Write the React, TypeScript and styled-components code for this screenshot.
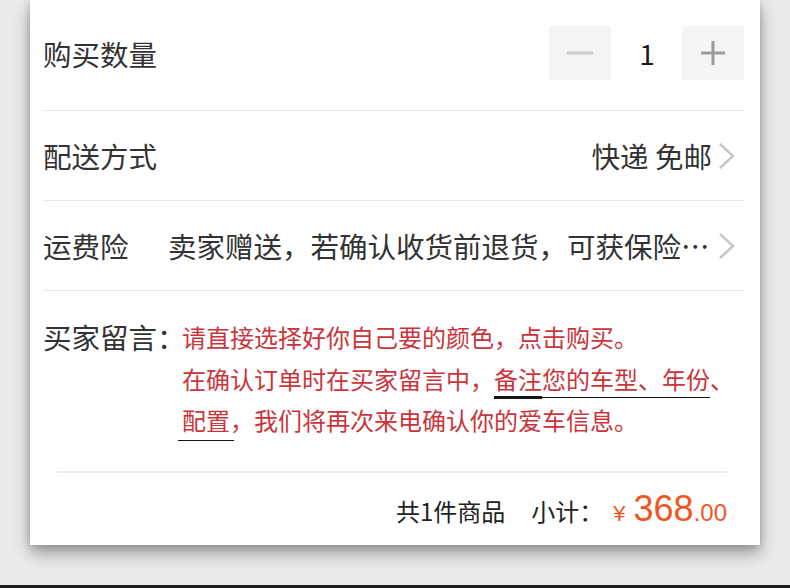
import React from "react";
import styled, { createGlobalStyle } from "styled-components";

const GlobalStyle = createGlobalStyle`
  html, body {
    margin: 0;
    padding: 0;
    background: #ebebeb;
  }
  body {
    font-family: "Noto Sans CJK SC", "Noto Sans", sans-serif;
    -webkit-font-smoothing: antialiased;
  }
`;

const Page = styled.div`
  width: 790px;
  height: 588px;
  display: flex;
  flex-direction: column;
  overflow: hidden;
  background: #ebebeb;
`;

const Stage = styled.div`
  flex: 1;
  padding-left: 30px;
`;

const Card = styled.div`
  width: 730px;
  background: #ffffff;
  box-shadow: 0 8px 16px rgba(0, 0, 0, 0.36), 0 1px 7px rgba(0, 0, 0, 0.14);
`;

const BottomBar = styled.div`
  height: 3px;
  background: #1f1f1f;
`;

const RowList = styled.div`
  margin: 0 16px 0 13px;
`;

const Row = styled.div<{ $h: number; $pb?: number }>`
  height: ${(p) => p.$h}px;
  padding-bottom: ${(p) => p.$pb ?? 0}px;
  box-sizing: content-box;
  display: flex;
  align-items: center;
  border-bottom: 1px solid #e8e8e8;
  font-size: 28.5px;
  color: #333333;
`;

const Label = styled.div<{ $w?: number }>`
  flex: 0 0 ${(p) => (p.$w ? `${p.$w}px` : "auto")};
  white-space: nowrap;
`;

const Value = styled.div`
  flex: 1;
  min-width: 0;
  white-space: nowrap;
  overflow: hidden;
`;

const RightValue = styled.div`
  margin-left: auto;
  white-space: nowrap;
`;

const Chevron = styled.svg`
  flex: 0 0 auto;
  width: 24px;
  height: 30px;
  margin: 0 4px 0 4px;
`;

const Stepper = styled.div`
  margin-left: auto;
  display: flex;
  align-items: center;
`;

const StepButton = styled.div`
  width: 62px;
  height: 54px;
  background: #f5f5f5;
  display: flex;
  align-items: center;
  justify-content: center;
`;

const Count = styled.div`
  width: 71px;
  padding-left: 1px;
  box-sizing: border-box;
  text-align: center;
  font-size: 28px;
  color: #1a1a1a;
`;

const Message = styled.div`
  display: flex;
  align-items: flex-start;
  padding: 25px 16px 30.5px 13px;
  line-height: 41.5px;
`;

const MessageLabel = styled.div`
  flex: 0 0 139px;
  min-width: 0;
  font-size: 28.5px;
  color: #333333;
  white-space: nowrap;
`;

const MessageText = styled.div`
  flex: 1;
  font-size: 24px;
  color: #c9353b;
`;

const Mark = styled.span<{ $thick?: boolean; $extra?: number }>`
  border-bottom: ${(p) => (p.$thick ? 3 : 1)}px solid #151515;
  padding-bottom: ${(p) => p.$extra ?? 0}px;
`;

const WideMark = styled.span`
  border-bottom: 1px solid #151515;
  padding: 0 4px 3px;
  margin: 0 -4px;
`;

const Footer = styled.div`
  margin: 0 33px 0 27px;
  border-top: 2px solid #ececec;
  display: flex;
  justify-content: flex-end;
  align-items: baseline;
  padding-top: 15px;
  box-sizing: border-box;
  height: 74px;
`;

const Summary = styled.span`
  font-size: 24px;
  color: #222222;
  margin-right: 26px;
`;

const SubLabel = styled.span`
  font-size: 24px;
  color: #222222;
  margin-right: 10px;
`;

const Currency = styled.span`
  font-family: "Liberation Sans", Arial, sans-serif;
  font-size: 22px;
  color: #f2561f;
  margin-right: 8px;
`;

const PriceMain = styled.span`
  font-family: "Liberation Sans", Arial, sans-serif;
  font-size: 36px;
  color: #f2561f;
`;

const PriceCents = styled.span`
  font-family: "Liberation Sans", Arial, sans-serif;
  font-size: 24px;
  color: #f2561f;
`;

const ChevronIcon = () => (
  <Chevron viewBox="0 0 24 30">
    <polyline
      points="4,3 17,15 4,27"
      fill="none"
      stroke="#c8c8c8"
      strokeWidth="2.6"
    />
  </Chevron>
);

const MinusIcon = () => (
  <svg width="28" height="28" viewBox="0 0 28 28">
    <rect x="1" y="12.5" width="26" height="3" fill="#cacaca" />
  </svg>
);

const PlusIcon = () => (
  <svg width="26" height="26" viewBox="0 0 26 26">
    <rect x="1" y="11.5" width="24" height="3" fill="#9b9b9b" />
    <rect x="11.5" y="1" width="3" height="24" fill="#9b9b9b" />
  </svg>
);

export default function App() {
  return (
    <>
      <GlobalStyle />
      <Page>
        <Stage>
          <Card>
            <RowList>
              <Row $h={106} $pb={4}>
                <Label>购买数量</Label>
                <Stepper>
                  <StepButton>
                    <MinusIcon />
                  </StepButton>
                  <Count>1</Count>
                  <StepButton>
                    <PlusIcon />
                  </StepButton>
                </Stepper>
              </Row>
              <Row $h={89}>
                <Label>配送方式</Label>
                <RightValue>快递 免邮</RightValue>
                <ChevronIcon />
              </Row>
              <Row $h={89}>
                <Label $w={125}>运费险</Label>
                <Value>卖家赠送，若确认收货前退货，可获保险…</Value>
                <ChevronIcon />
              </Row>
            </RowList>
            <Message>
              <MessageLabel>买家留言：</MessageLabel>
              <MessageText>
                请直接选择好你自己要的颜色，点击购买。
                <br />
                在确认订单时在买家留言中，
                <Mark $thick>备注</Mark>
                <Mark $extra={1}>您的车型、年份</Mark>、
                <br />
                <WideMark>配置</WideMark>，我们将再次来电确认你的爱车信息。
              </MessageText>
            </Message>
            <Footer>
              <Summary>共1件商品</Summary>
              <SubLabel>小计：</SubLabel>
              <Currency>¥</Currency>
              <PriceMain>368</PriceMain>
              <PriceCents>.00</PriceCents>
            </Footer>
          </Card>
        </Stage>
        <BottomBar />
      </Page>
    </>
  );
}
